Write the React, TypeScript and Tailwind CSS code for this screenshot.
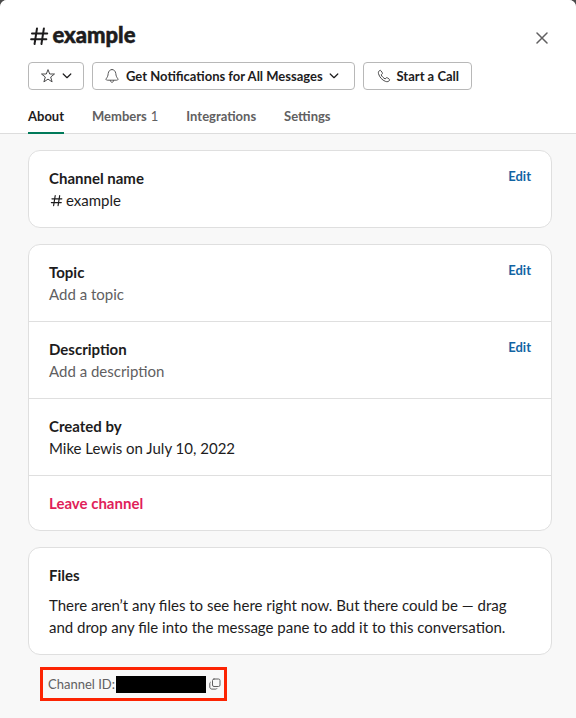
import type { ReactNode } from 'react';

function Hash({ size, weight, className = '' }: { size: number; weight: number; className?: string }) {
  return (
    <svg width={size} height={size} viewBox="0 0 18 18" fill="none" stroke="currentColor" strokeWidth={weight} strokeLinecap="round" className={className}>
      <path d="M7.200 2.200 5 16.200M13.400 2.200l-2.200 14M2.700 6.700h13.700M1.900 11.900h13.700" />
    </svg>
  );
}

function Star() {
  return (
    <svg width="16" height="16" viewBox="0 0 16 16" fill="none" stroke="#4a4a4b" strokeWidth="1" strokeLinejoin="round">
      <path d="M8 1.600 9.700 6h4.800l-3.800 3 1.400 4.900L8 11.100l-4.100 2.800L5.300 9 1.500 6h4.800z" />
    </svg>
  );
}

function Bell() {
  return (
    <svg width="16" height="16" viewBox="0 0 16 16" fill="none" stroke="#5a5a5b" strokeWidth="1" strokeLinejoin="round" strokeLinecap="round">
      <path d="M8 1.500C6 1.500 4.500 3.200 4.200 5.500c-.2 2.200-.7 3.500-1.700 4.700-.9 1.100-.6 2 .8 2h9.400c1.400 0 1.700-.9.8-2-1-1.200-1.500-2.500-1.700-4.700C11.500 3.200 10 1.500 8 1.500z" />
      <path d="M6.300 12.400c.2 1.200.8 1.900 1.700 1.900s1.500-.7 1.700-1.900" />
    </svg>
  );
}

function Phone() {
  return (
    <svg width="14" height="14" viewBox="0 0 14 14" fill="none" stroke="#4a4a4b" strokeWidth="1" strokeLinejoin="round">
      <path d="M2.700 1.500C1.600 2.100 1.100 3.300 1.500 4.700c1 3.500 3.700 6.500 7 7.700 1.700.6 3.300.2 4-1.100.3-.5.1-.9-.3-1.200L10.300 8.800c-.5-.3-.9-.2-1.300.2l-.8.9C6.500 9.100 5 7.600 4.200 5.900l.9-.8c.4-.4.500-.8.200-1.300L4 1.800c-.3-.5-.8-.6-1.300-.3z" />
    </svg>
  );
}

function Chevron() {
  return (
    <svg width="10" height="6" viewBox="0 0 10 6" fill="none" stroke="#1d1c1d" strokeWidth="1.200" strokeLinecap="round" strokeLinejoin="round">
      <path d="M1.200 1 5 4.700 8.800 1" />
    </svg>
  );
}

function Copy() {
  return (
    <svg width="12" height="12" viewBox="0 0 12 12" fill="none" stroke="#616061" strokeWidth="1" strokeLinecap="round" strokeLinejoin="round">
      <rect x="3.500" y="1" width="7.500" height="7.500" rx="1.500" />
      <path d="M1.300 4.300C1 4.500.8 4.900.8 5.300v3.700c0 1.200.9 2.100 2.100 2.100h3.900c.5 0 .9-.2 1.100-.5" />
    </svg>
  );
}

function Row({ title, edit, children }: { title: string; edit?: boolean; children: ReactNode }) {
  return (
    <div className="flex items-start justify-between px-5 py-4">
      <div>
        <h2 className="font-bold">{title}</h2>
        <div className="font-normal">{children}</div>
      </div>
      {edit && <button className="text-[13px] leading-[19px] font-bold text-[#1264a3]">Edit</button>}
    </div>
  );
}

const card = 'rounded-xl border border-[#dfdfdf] bg-white';
const button = 'flex h-7 items-center rounded border border-[#b8b8b8] bg-white text-[13px] font-bold';
const tabs = ['Members', 'Integrations', 'Settings'];

export default function App() {
  return (
    <div className="h-[718px] w-[576px] overflow-hidden bg-[#4b4b4b] font-['Lato',sans-serif] text-[15px] leading-[22px] text-[#1d1c1d]">
      <div className="flex h-full flex-col overflow-hidden rounded-t-[7px] bg-[#f8f8f8]">
        <header className="flex h-[134px] shrink-0 flex-col border-b border-[#dddddd] bg-white px-7">
          <div className="mt-5 flex h-[30px] items-center justify-between">
            <h1 className="flex items-center text-[22px] leading-[30px] font-black">
              <Hash size={20} weight={1.800} className="mt-0.5 mr-[3px] ml-px" />
              <span className="pl-[0.400px] [-webkit-text-stroke:0.500px_#1d1c1d]">example</span>
            </h1>
            <button aria-label="Close" className="mt-1.5">
              <svg width="12" height="12" viewBox="0 0 12 12" fill="none" stroke="#616061" strokeWidth="1.500" strokeLinecap="round">
                <path d="m1 1 10 10M11 1 1 11" />
              </svg>
            </button>
          </div>
          <div className="mt-3 flex gap-2">
            <button className={`${button} w-14 gap-1.5 pl-[10.500px]`}>
              <Star />
              <Chevron />
            </button>
            <button className={`${button} w-[263px] pl-[11px]`}>
              <Bell />
              <span className="mr-1.5 ml-1.5">Get Notifications for All Messages</span>
              <Chevron />
            </button>
            <button className={`${button} w-[109px] gap-1.5 pl-[12.500px]`}>
              <Phone />
              Start a Call
            </button>
          </div>
          <nav className="mt-[14px] flex gap-7 text-[13px] leading-6 font-bold text-[#616061]">
            <button className="flex h-[30px] items-start border-b-2 border-[#007a5a] text-[#1d1c1d]">About</button>
            {tabs.map((tab) => (
              <button key={tab} className="flex h-[30px] items-start border-b-2 border-transparent">
                {tab}
                {tab === 'Members' && <span className="ml-1 font-normal">1</span>}
              </button>
            ))}
          </nav>
        </header>
        <main className="flex flex-col gap-4 px-7 pt-4 pr-6">
          <section className={`${card} w-[524px]`}>
            <Row title="Channel name" edit>
              <span className="flex items-center">
                <Hash size={13} weight={1.600} className="mt-px mr-[3px] ml-px" />
                example
              </span>
            </Row>
          </section>
          <section className={`${card} w-[524px] divide-y divide-[#dfdfdf]`}>
            <Row title="Topic" edit>
              <span className="text-[#616061]">Add a topic</span>
            </Row>
            <Row title="Description" edit>
              <span className="text-[#616061]">Add a description</span>
            </Row>
            <Row title="Created by">Mike Lewis on July 10, 2022</Row>
            <button className="block w-full px-5 py-4 text-left font-bold text-[#e01e5a]">Leave channel</button>
          </section>
          <section className={`${card} w-[524px] px-5 py-4`}>
            <h2 className="font-bold">Files</h2>
            <p className="mt-2">
              There aren’t any files to see here right now. But there could be — drag and drop any file into the message pane to add it to this conversation.
            </p>
          </section>
        </main>
        <footer className="mt-3 ml-10 flex h-[34px] w-[187px] items-center border-3 border-[#fc2403] pl-[5px] text-[13px] text-[#616061]">
          <span className="w-[68px] whitespace-nowrap">Channel ID:</span>
          <span className="mr-[3px] h-[17px] w-[90px] bg-black" />
          <Copy />
        </footer>
      </div>
    </div>
  );
}
